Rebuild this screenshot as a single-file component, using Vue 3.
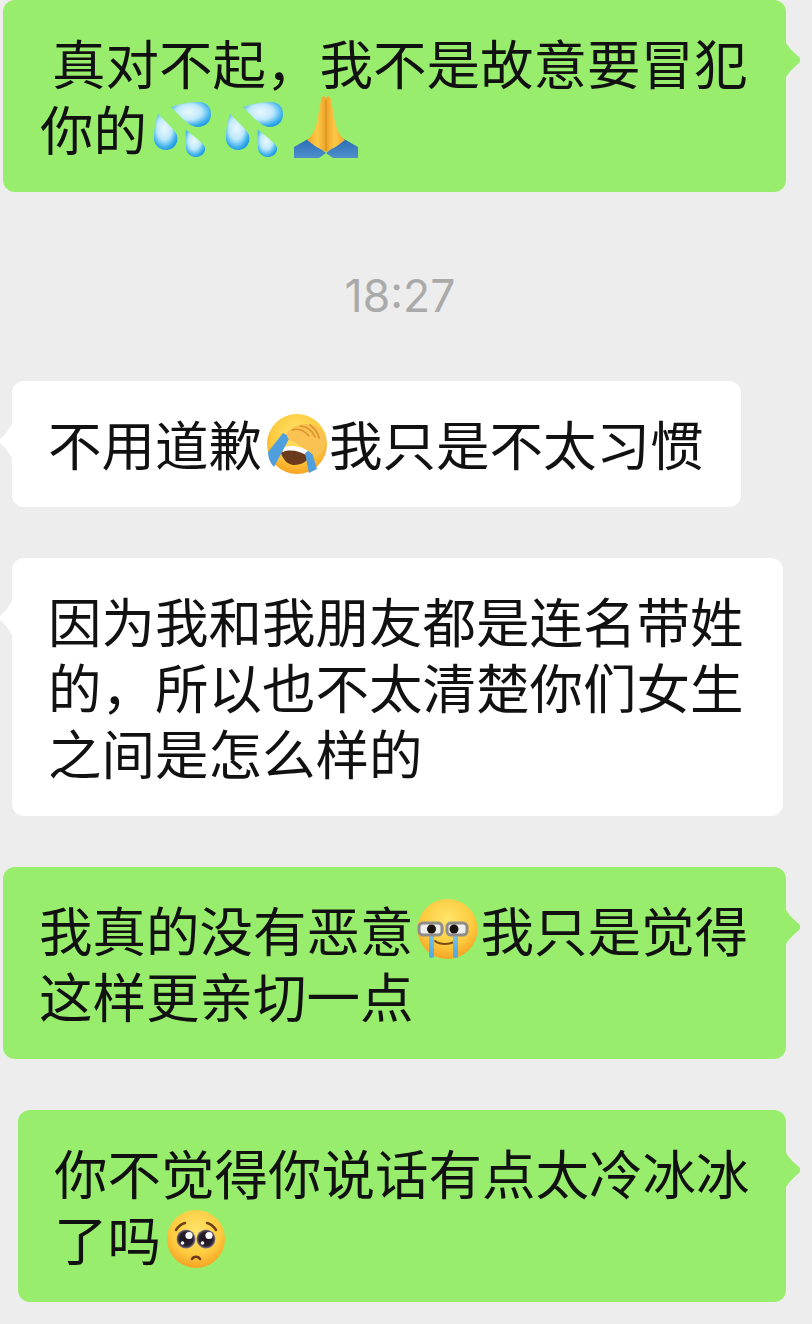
<script setup>
const bubbles = 5
</script>

<template>
  <main class="chat" :data-count="bubbles">
    <svg class="defs" width="0" height="0" aria-hidden="true">
      <defs>
        <radialGradient id="dropFill" cx="0.45" cy="0.4" r="0.62">
          <stop offset="0" stop-color="#e9f9ff" />
          <stop offset="0.5" stop-color="#bfe9fb" />
          <stop offset="0.85" stop-color="#3fb2ee" />
          <stop offset="1" stop-color="#2199e2" />
        </radialGradient>
        <radialGradient id="face" cx="0.5" cy="0.35" r="0.7">
          <stop offset="0" stop-color="#ffe56a" />
          <stop offset="0.6" stop-color="#fdcb3f" />
          <stop offset="1" stop-color="#f59a1e" />
        </radialGradient>
        <linearGradient id="handL" x1="0" y1="0" x2="1" y2="0">
          <stop offset="0" stop-color="#f2a52a" />
          <stop offset="0.55" stop-color="#fcc947" />
          <stop offset="1" stop-color="#eda228" />
        </linearGradient>
        <linearGradient id="handR" x1="1" y1="0" x2="0" y2="0">
          <stop offset="0" stop-color="#f2a52a" />
          <stop offset="0.55" stop-color="#fcc947" />
          <stop offset="1" stop-color="#eda228" />
        </linearGradient>
        <linearGradient id="sleeve" x1="0" y1="0" x2="0" y2="1">
          <stop offset="0" stop-color="#2a6db6" />
          <stop offset="1" stop-color="#4f8fcb" />
        </linearGradient>
        <linearGradient id="tear" x1="0" y1="0" x2="0" y2="1">
          <stop offset="0" stop-color="#7cc7ec" />
          <stop offset="1" stop-color="#4da6dc" />
        </linearGradient>
        <radialGradient id="eye" cx="0.5" cy="0.5" r="0.5">
          <stop offset="0" stop-color="#1c1420" />
          <stop offset="0.75" stop-color="#2a2130" />
          <stop offset="1" stop-color="#8a8090" />
        </radialGradient>
      </defs>
      <symbol id="sweat" viewBox="0 0 72 66">
        <g fill="url(#dropFill)">
          <path d="M24 11C34 7 46 6 52 6C60 6 64 12 64 18C64 26 58 31 51 31C45 31 40 27 35 22C31 18 27 14 24 11Z" />
          <path d="M11 18C16 23 25 31 29 37C33 45 28 54 19 54C11 54 6 47 7 40C7 32 9 24 11 18Z" />
          <path d="M39 34C44 38 52 44 56 48C61 54 56 61 49 61C42 61 38 55 39 49C39 44 38 38 39 34Z" />
        </g>
      </symbol>
    </svg>

    <section class="bubble mine first">
      <p class="lines"> 真对不起，我不是故意要冒犯<br />你的<svg class="emoji wide" viewBox="0 -1 72 66"><use href="#sweat" width="72" height="66" /></svg><svg class="emoji wide" viewBox="0 -1 72 66"><use href="#sweat" width="72" height="66" /></svg><svg class="emoji wide" viewBox="0 -1 72 66">
        <path d="M3 51L17 43L35 57L28 62H3Z" fill="url(#sleeve)" />
        <path d="M67 51L53 43L35 57L42 62H67Z" fill="url(#sleeve)" />
        <path d="M31 1C34 -1 35 2 35 6V56C32 54 27 52 24 50L16 44C21 40 24 34 26 26C28 16 29 6 31 1Z" fill="url(#handL)" />
        <path d="M39 1C36 -1 35 2 35 6V56C38 54 43 52 46 50L54 44C49 40 46 34 44 26C42 16 41 6 39 1Z" fill="url(#handR)" />
        <path d="M35 4V55" stroke="#d98c1f" stroke-width="1" />
      </svg></p>
    </section>

    <div class="time">18:27</div>

    <section class="bubble theirs short">
      <p class="lines">不用道歉<svg class="emoji" viewBox="-2 -1 67 66">
        <circle cx="33" cy="33" r="30" fill="url(#face)" />
        <path d="M17 42C24 36 38 38 46 44C44 50 38 54 30 54C24 54 19 49 17 42Z" fill="#6b3a1c" />
        <path d="M18 37C26 33 38 35 46 41L44 45C36 40 26 38 19 41Z" fill="#fff" />
        <path d="M4 41L19 22L26 26L10 56C6 52 4 47 4 41Z" fill="#4f9fdf" />
        <path d="M41 42L47 38L53 58L45 62Z" fill="#4f9fdf" />
        <path d="M24 21C30 13 44 11 52 15C60 19 63 28 60 37C58 45 52 46 48 43C42 38 34 33 26 29C23 27 22 24 24 21Z" fill="#f9c252" />
        <g fill="none" stroke="#dd942a" stroke-width="1.6" stroke-linecap="round">
          <path d="M28 19C34 17 40 19 45 25" />
          <path d="M36 15C42 15 48 19 51 26" />
          <path d="M46 14C50 17 54 21 55 27" />
        </g>
      </svg>我只是不太习惯</p>
    </section>

    <section class="bubble theirs long">
      <p class="lines">因为我和我朋友都是连名带姓<br />的，所以也不太清楚你们女生<br />之间是怎么样的</p>
    </section>

    <section class="bubble mine">
      <p class="lines">我真的没有恶意<svg class="emoji" viewBox="0 -1 67 66">
        <circle cx="33.5" cy="32" r="30" fill="url(#face)" />
        <path d="M21 44C26 48 36 48 41 44" fill="none" stroke="#7a4a16" stroke-width="2" stroke-linecap="round" />
        <rect x="15" y="36" width="5" height="25" rx="2.5" fill="url(#tear)" />
        <rect x="39" y="36" width="5" height="25" rx="2.5" fill="url(#tear)" />
        <rect x="5" y="26" width="23" height="12" rx="4" fill="#efeeea" stroke="#8f8d8a" stroke-width="3" />
        <rect x="33" y="26" width="20" height="12" rx="4" fill="#efeeea" stroke="#8f8d8a" stroke-width="3" />
        <circle cx="17.5" cy="32" r="4.5" fill="#1a1410" />
        <circle cx="40" cy="32" r="4.5" fill="#1a1410" />
      </svg>我只是觉得<br />这样更亲切一点</p>
    </section>

    <section class="bubble mine last">
      <p class="lines">你不觉得你说话有点太冷冰冰<br />了吗<svg class="emoji" viewBox="0 -1 67 66">
        <circle cx="35" cy="33" r="29" fill="url(#face)" />
        <path d="M15 24C17 21 20 18 24 17" fill="none" stroke="#6f4212" stroke-width="2.6" stroke-linecap="round" />
        <path d="M46 17C50 18 53 21 55 24" fill="none" stroke="#6f4212" stroke-width="2.6" stroke-linecap="round" />
        <circle cx="25" cy="33" r="9.5" fill="url(#eye)" />
        <circle cx="45" cy="33" r="9.5" fill="url(#eye)" />
        <circle cx="28" cy="29.5" r="3.6" fill="#fff" />
        <circle cx="48" cy="29.5" r="3.6" fill="#fff" />
        <circle cx="21.5" cy="37" r="1.8" fill="#fff" />
        <circle cx="41.5" cy="37" r="1.8" fill="#fff" />
        <path d="M31 53C32.5 50 37.5 50 39 53" fill="none" stroke="#6b3a1c" stroke-width="2.6" stroke-linecap="round" />
      </svg></p>
    </section>
  </main>
</template>

<style scoped>
.chat {
  display: flex;
  flex-direction: column;
  align-items: flex-start;
  gap: 51px;
  min-height: 1324px;
  background: #ededed;
  font-family: "Noto Sans CJK SC", "Noto Sans", sans-serif;
}
.defs {
  position: absolute;
}
.bubble {
  position: relative;
  box-sizing: border-box;
  padding: 29px 0 31px 36px;
  border-radius: 12px;
  color: #111;
}
.bubble::after {
  content: "";
  position: absolute;
  top: 43px;
  width: 14px;
  height: 34px;
}
.lines {
  margin: 0;
  font-size: 53.5px;
  line-height: 66px;
  white-space: pre;
}
.mine {
  background: #98ee6c;
  margin-left: 3px;
  width: 783px;
}
.mine::after {
  left: 100%;
  background: #98ee6c;
  clip-path: path("M0 0C3 5 8 10 13 14C15 16 15 18 13 20C8 24 3 29 0 34Z");
}
.theirs {
  background: #fff;
  margin-left: 12px;
}
.theirs::after {
  right: 100%;
  width: 12px;
  background: #fff;
  clip-path: path("M12 0C9 5 6 10 1 14C-1 16 -1 18 1 20C6 24 9 29 12 34Z");
}
.short {
  width: 729px;
}
.long {
  width: 771px;
}
.last {
  margin-left: 18px;
  width: 768px;
}
.first {
  padding-left: 37px;
}
.time {
  box-sizing: border-box;
  align-self: stretch;
  height: 87px;
  padding: 19px 12px 0 0;
  display: flex;
  align-items: center;
  justify-content: center;
  color: #aaaaaa;
  font-family: Inter, "Noto Sans", sans-serif;
  font-size: 44.5px;
}
.emoji {
  display: inline-block;
  width: 67px;
  height: 66px;
  vertical-align: top;
}
.wide {
  width: 72px;
}
</style>

<style>
html,
body {
  background: #ededed;
}
</style>
